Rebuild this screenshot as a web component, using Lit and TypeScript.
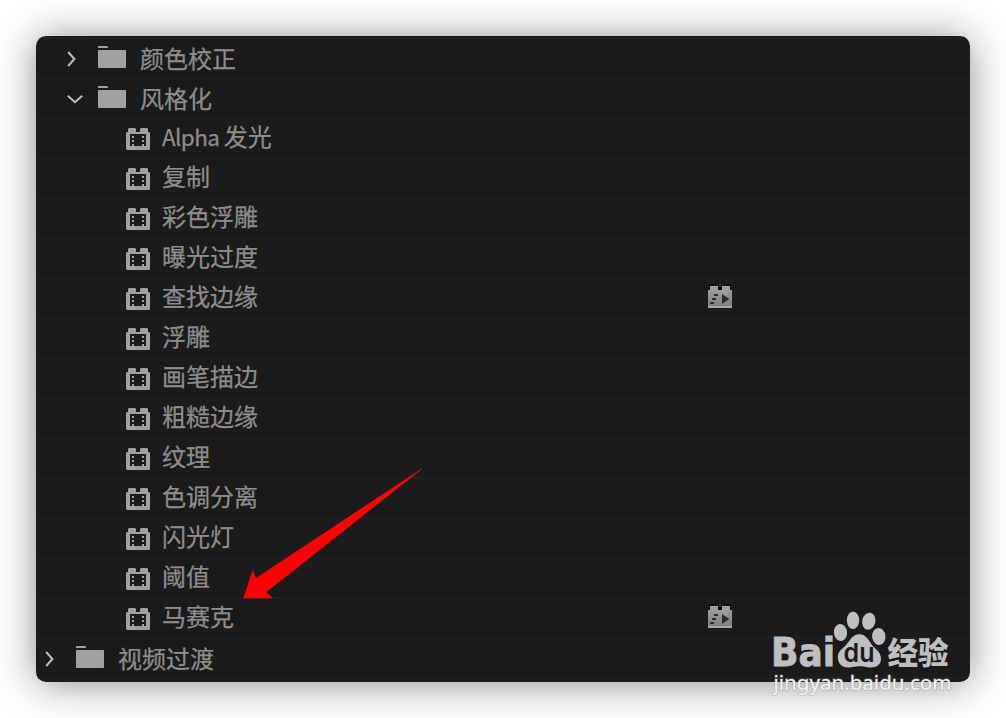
import { LitElement, html, css, nothing } from 'lit';
import { customElement, property } from 'lit/decorators.js';

interface Row {
  label: string;
  latin?: string;
  kind: 'folder' | 'effect';
  level: number;
  open?: boolean;
  accelerated?: boolean;
}

const effect = (label: string, accelerated = false, latin = ''): Row => ({
  label,
  latin,
  kind: 'effect',
  level: 2,
  accelerated,
});

const ROWS: Row[] = [
  { label: '颜色校正', kind: 'folder', level: 1 },
  { label: '风格化', kind: 'folder', level: 1, open: true },
  effect('发光', false, 'Alpha'),
  effect('复制'),
  effect('彩色浮雕'),
  effect('曝光过度'),
  effect('查找边缘', true),
  effect('浮雕'),
  effect('画笔描边'),
  effect('粗糙边缘'),
  effect('纹理'),
  effect('色调分离'),
  effect('闪光灯'),
  effect('阈值'),
  effect('马赛克', true),
  { label: '视频过渡', kind: 'folder', level: 0 },
];

const chevron = (open: boolean) => html`
  <svg class="chevron" width="20" height="20" viewBox="0 0 20 20">
    <path d=${open ? 'M2.8 6.8L10 13.2L17.2 6.8' : 'M3.2 3L9.4 10L3.2 17'} />
  </svg>
`;

const folderIcon = html`
  <svg class="folder" width="28" height="22" viewBox="0 0 28 22">
    <path d="M0 .6Q0 0 .6 0H9L10 1V2H0Z" />
    <rect y="4" width="28" height="18" rx=".8" />
  </svg>
`;

const effectIcon = html`
  <svg class="effect" width="24" height="22" viewBox="0 0 24 22">
    <path
      fill-rule="evenodd"
      d="M3 0H9L10 1V4H14V1L15 0H21L22 1V4H23L24 5V21L23 22H1L0 21V5L1 4H2V1ZM4 6V18H20V6Z"
    />
    <path
      d="M6 8h2v2H6zM6 12h2v2H6zM6 16h2v2H6zM16 8h2v2h-2zM16 12h2v2h-2zM16 16h2v2h-2z"
    />
  </svg>
`;

const acceleratedIcon = html`
  <svg class="accelerated" width="26" height="24" viewBox="0 0 26 24">
    <defs>
      <linearGradient id="metal" x1="0" y1="0" x2="0" y2="1">
        <stop offset="0" stop-color="#a4a4a4" />
        <stop offset="1" stop-color="#7c7c7c" />
      </linearGradient>
    </defs>
    <path fill="#0c0c0c" d="M2 0H12V4H14V0H24V6H25V8H1V4H2Z" />
    <path fill="url(#metal)" d="M3 2H11V6H15V2H23V6H25V24H1V6H3Z" />
    <rect fill="#a6a6a6" x="1" y="22" width="24" height="2" />
    <path fill="#2b2b2b" d="M7 10h4v2H7zM5 14h4v2H5zM3 18h4v2H3zM15 10L22.4 15L15 20Z" />
  </svg>
`;

@customElement('effect-row')
export class EffectRow extends LitElement {
  static styles = css`
    :host {
      display: block;
    }
    .row {
      box-sizing: border-box;
      height: 40px;
      border-top: 2px solid #202020;
      display: flex;
      align-items: flex-start;
      color: #8d8d8d;
      font: 24px/34px 'Noto Sans CJK SC', sans-serif;
      -webkit-text-stroke: 0.25px #8d8d8d;
    }
    .level-0 {
      padding-left: 8px;
    }
    .level-1 {
      padding-left: 30px;
    }
    .level-2 {
      padding-left: 90px;
    }
    svg {
      display: block;
      flex: none;
      fill: #a1a1a1;
    }
    .chevron {
      margin: 10px 13px 0 -1px;
      fill: none;
      stroke: #bdbdbd;
      stroke-width: 2;
    }
    .folder {
      margin-top: 7px;
      margin-right: 14px;
    }
    .effect {
      margin-top: 9px;
      margin-right: 12px;
    }
    .name {
      flex: none;
      width: 545px;
      white-space: nowrap;
    }
    .latin {
      font-size: 22.5px;
      letter-spacing: -0.6px;
    }
    .level-0 .name,
    .level-1 .name {
      padding-top: 2px;
    }
    .accelerated {
      margin-top: 5px;
    }
  `;

  @property({ attribute: false }) row!: Row;

  render() {
    const { label, latin, kind, level, open, accelerated } = this.row;
    return html`
      <div class="row level-${level}">
        ${kind === 'folder' ? [chevron(!!open), folderIcon] : effectIcon}
        <span class="name">${latin ? html`<span class="latin">${latin} </span>` : nothing}${label}</span>
        ${accelerated ? acceleratedIcon : nothing}
      </div>
    `;
  }
}

@customElement('app-root')
export class AppRoot extends LitElement {
  static styles = css`
    :host {
      display: block;
      position: relative;
      box-sizing: border-box;
      width: 1006px;
      height: 718px;
      padding: 36px;
      background: #fff;
      overflow: hidden;
    }
    .panel {
      box-sizing: border-box;
      height: 646px;
      padding-top: 1px;
      border-radius: 10px;
      background: #1b1b1b;
      box-shadow: 0 2px 40px rgba(0, 0, 0, 0.45);
      overflow: hidden;
    }
    .end {
      height: 2px;
      background: #202020;
    }
    .overlay {
      position: absolute;
      inset: 0;
    }
    .brand {
      fill: #bfbfbf;
    }
    .bai {
      font: bold 39px 'DejaVu Sans', sans-serif;
      stroke: #bfbfbf;
      stroke-width: 0.9;
    }
    .du {
      font: 600 26px Inter, 'DejaVu Sans', sans-serif;
      fill: #1b1b1b;
    }
    .cjk {
      font: 900 31px 'Noto Sans CJK SC', sans-serif;
    }
    .url {
      font: 20px 'Noto Sans', sans-serif;
      fill: #f4f4f4;
      stroke: rgba(150, 150, 150, 0.45);
      stroke-width: 1.6;
      paint-order: stroke;
    }
  `;

  render() {
    return html`
      <div class="panel">
        ${ROWS.map((row) => html`<effect-row .row=${row}></effect-row>`)}
        <div class="end"></div>
      </div>
      <svg class="overlay" width="1006" height="718" viewBox="0 0 1006 718">
        <path
          fill="#ff0004"
          d="M422 468.3L256 578L252.7 570L243.3 598.2H273L266.3 592.3L422 469Z"
        />
        <g class="brand">
          <text class="bai" x="771" y="666" textLength="64" lengthAdjust="spacingAndGlyphs">Bai</text>
          <ellipse cx="840.5" cy="632.5" rx="6.6" ry="8.6" transform="rotate(-6 840.5 632.5)" />
          <ellipse cx="853" cy="620.2" rx="6.2" ry="8.8" />
          <ellipse cx="868.8" cy="621.2" rx="6.6" ry="8.6" transform="rotate(12 868.8 621.2)" />
          <ellipse cx="878.8" cy="636.5" rx="6.7" ry="8.5" transform="rotate(-6 878.8 636.5)" />
          <path
            d="M859.3 634.3C866 634.3 869 641 872 645C876 650 881 652 881 659C881 664 877 667.5 871 667.5C866 667.5 864 666.3 859.5 666.3C855 666.3 853 667.5 848 667.5C841.5 667.5 837.8 663 837.8 657C837.8 651 843 648.5 846.5 644.5C850 640.5 852.5 634.3 859.3 634.3Z"
          />
          <text class="du" x="843.5" y="662" textLength="31" lengthAdjust="spacingAndGlyphs">du</text>
          <text class="cjk" x="887.5" y="664" textLength="61" lengthAdjust="spacingAndGlyphs">经验</text>
        </g>
        <text class="url" x="773.5" y="690" textLength="178" lengthAdjust="spacingAndGlyphs">jingyan.baidu.com</text>
      </svg>
    `;
  }
}
